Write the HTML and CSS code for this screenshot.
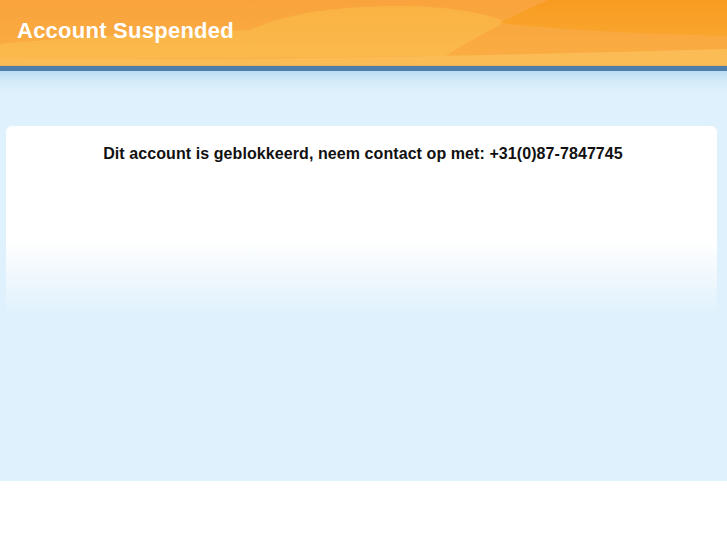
FILE: index.html
```html
<!DOCTYPE html>
<html>
<head>
<meta charset="utf-8">
<title>Account Suspended</title>
<link rel="stylesheet" href="styles.css">
</head>
<body>
<div class="page">
  <header class="header">
    <svg class="header-bg" viewBox="0 0 727 65" preserveAspectRatio="none" aria-hidden="true">
      <defs>
        <linearGradient id="g1" x1="0" y1="0" x2="0" y2="1">
          <stop offset="0" stop-color="#f9a33c"/>
          <stop offset="1" stop-color="#faae44"/>
        </linearGradient>
        <linearGradient id="g2" x1="0" y1="0" x2="0" y2="1">
          <stop offset="0" stop-color="#fab343"/>
          <stop offset="1" stop-color="#fbb94d"/>
        </linearGradient>
        <linearGradient id="g3" x1="0" y1="0" x2="0" y2="1">
          <stop offset="0" stop-color="#f89c20"/>
          <stop offset="1" stop-color="#f9a52e"/>
        </linearGradient>
      </defs>
      <rect width="727" height="65" fill="url(#g1)"/>
      <path d="M0 44 C80 36 180 32 250 30 C290 12 340 6 400 6 C450 6 490 14 505 22 C480 36 460 46 445 56 L0 60 Z" fill="url(#g2)"/>
      <path d="M548 0 C530 8 515 15 500 23 C560 30 650 34 727 36 L727 0 Z" fill="url(#g3)"/>
      <path d="M0 58 C200 61 450 57 727 49 L727 65 L0 65 Z" fill="#fbbb55"/>
    </svg>
    <h1 class="title">Account Suspended</h1>
  </header>
  <div class="rule"></div>
  <main class="content">
    <section class="card">
      <p class="message">Dit account is geblokkeerd, neem contact op met: +31(0)87-7847745</p>
    </section>
  </main>
</div>
</body>
</html>
```

FILE: styles.css
```css
html, body {
  margin: 0;
  padding: 0;
  background: #ffffff;
}
body {
  font-family: "Liberation Sans", Arial, Helvetica, sans-serif;
}
.page {
  height: 481px;
  background: #dff1fd;
  display: flex;
  flex-direction: column;
}
.header {
  position: relative;
  height: 65px;
  overflow: hidden;
  flex: none;
}
.header-bg {
  position: absolute;
  left: 0;
  top: 0;
  width: 100%;
  height: 100%;
}
.title {
  position: relative;
  margin: 0;
  padding: 18px 0 0 17px;
  color: #ffffff;
  font-size: 22px;
  font-weight: bold;
  line-height: 26px;
  letter-spacing: 0.25px;
}
.rule {
  height: 6px;
  background: #4f7fa9;
  border-top: 1px solid #e9b25a;
  box-sizing: border-box;
  flex: none;
}
.content {
  flex: 1;
  background: linear-gradient(to bottom, #b9def2 0px, #d3eaf8 10px, #dff1fd 22px);
  background-size: 100% 30px;
  background-repeat: no-repeat;
  background-color: #dff1fd;
  padding: 55px 10px 0 6px;
}
.card {
  height: 190px;
  border-radius: 6px 6px 0 0;
  background: linear-gradient(to bottom, #ffffff 0px, #ffffff 115px, #f0f8fd 150px, #dff1fd 190px);
  padding-top: 18px;
  box-sizing: border-box;
}
.message {
  margin: 0;
  padding-left: 3px;
  text-align: center;
  font-size: 16px;
  font-weight: bold;
  line-height: 20px;
  letter-spacing: 0.08px;
  color: #111111;
}
```
